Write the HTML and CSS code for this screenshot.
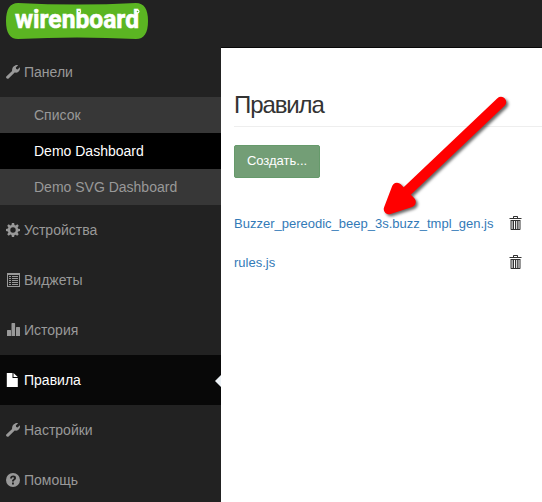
FILE: index.html
```html
<!DOCTYPE html>
<html lang="ru">
<head>
<meta charset="utf-8">
<title>Правила</title>
<link rel="stylesheet" href="styles.css">
</head>
<body>
<svg class="defs" width="0" height="0">
  <symbol id="wrench" viewBox="0 0 14 14"><path d="M.3 11.500 6.100 6C5.800 3.400 7 1.200 9.200.4c1-.4 2-.4 2.900-.1L9.800 2.600l.4 1.300 1.400.5L13.800 2.300c.5 1.800-.1 3.500-1.400 4.500-1 .8-2.300 1-3.700.7L2.600 13.500c-.5.5-1.100.4-1.700-.1-.8-.6-1.100-1.300-.6-1.900Z"/></symbol>
  <symbol id="cog" viewBox="0 0 14 14"><path fill-rule="evenodd" d="M5.900 0h2.200l.4 1.900 1.100.5L11.300 1.300l1.500 1.500-1.200 1.700.5 1.200 1.900.3v2.100l-1.900.4-.5 1.100 1.100 1.700-1.500 1.500-1.600-1.100-1.200.5L8.100 14H5.900l-.4-1.900-1.100-.5-1.700 1.200-1.500-1.500 1.200-1.700-.5-1.100L0 8.100V6l1.900-.4.500-1.200L1.200 2.800l1.500-1.500 1.700 1.100 1.100-.5ZM7 4.300a2.700 2.700 0 1 0 0 5.400 2.700 2.700 0 0 0 0-5.400Z"/></symbol>
  <symbol id="list" viewBox="0 0 14 14"><path fill-rule="evenodd" d="M1 0h13v14H1ZM2 2v11h11V2ZM3 3h2v1h-2ZM6 3h6v1h-6ZM3 5h2v1h-2ZM6 5h6v1h-6ZM3 7h2v1h-2ZM6 7h6v1h-6ZM3 9h2v1h-2ZM6 9h6v1h-6ZM3 11h2v1h-2ZM6 11h6v1h-6Z"/></symbol>
  <symbol id="stats" viewBox="0 0 14 14"><path d="M1 13V7.600q0-.6.600-.6H4.400q.6 0 .6.600V13ZM5.500 13V.6q0-.6.600-.6H8.500q.6 0 .6.600V13ZM10 13V4.600q0-.6.600-.6h2.800q.6 0 .6.600V13Z"/></symbol>
  <symbol id="file" viewBox="0 0 14 14"><path d="M.8 0h5.700v5h5.300v9H.8ZM7.500 0l4.300 4H7.500Z"/></symbol>
  <symbol id="help" viewBox="0 0 14 14"><path fill-rule="evenodd" d="M7 0a7 7 0 1 1 0 14A7 7 0 0 1 7 0ZM4.100 5.400H6c0-.8.400-1.200 1-1.200s1 .3 1 .8c0 .6-.4.900-.9 1.300-.7.500-1.100 1-1.100 2.200h1.900c0-.7.300-1 .9-1.500.7-.5 1.200-1.100 1.200-2.100C10 3.300 8.900 2.500 7.200 2.500 5.300 2.500 4.100 3.500 4.100 5.400ZM6 9.600v1.800h1.900V9.600Z"/></symbol>
  <symbol id="trash" viewBox="0 0 13 14"><path fill-rule="evenodd" d="M4 2V.8Q4 0 4.800 0h3.400Q9 0 9 .8V2h3.500v1H.5V2ZM5 1v1h3V1ZM1.500 4h10v9.300q0 .7-.7.700H2.200q-.7 0-.7-.7ZM2.600 5v8h1V5ZM5 5v8h1V5ZM7.200 5v8h1V5ZM9.500 5v8h1V5Z"/></symbol>
</svg>
<header class="navbar">
  <svg class="logo" width="150" height="42" viewBox="0 0 150 42">
    <path class="logo-plate" d="M18 3Q77 6 136 3C144 3 148 9 148 21S144 39 136 39Q77 36 18 39C10 39 6 33 6 21S10 3 18 3Z"/>
    <text class="logo-text" x="15" y="28" textLength="124" lengthAdjust="spacingAndGlyphs">wirenboard</text>
    <circle class="logo-plug" cx="79" cy="11.500" r="2"/><circle class="logo-plug" cx="137.500" cy="11.500" r="2"/>
    <circle class="logo-hole" cx="79" cy="11.500" r=".8"/><circle class="logo-hole" cx="137.500" cy="11.500" r=".8"/>
  </svg>
</header>
<div class="layout">
  <nav class="sidebar">
    <a class="item"><svg class="icon"><use href="#wrench"/></svg>Панели</a>
    <div class="submenu">
      <a class="subitem">Список</a>
      <a class="subitem current">Demo Dashboard</a>
      <a class="subitem">Demo SVG Dashboard</a>
    </div>
    <a class="item"><svg class="icon"><use href="#cog"/></svg>Устройства</a>
    <a class="item"><svg class="icon"><use href="#list"/></svg>Виджеты</a>
    <a class="item"><svg class="icon"><use href="#stats"/></svg>История</a>
    <a class="item active"><svg class="icon"><use href="#file"/></svg>Правила</a>
    <a class="item"><svg class="icon"><use href="#wrench"/></svg>Настройки</a>
    <a class="item"><svg class="icon"><use href="#help"/></svg>Помощь</a>
  </nav>
  <main class="content">
    <h1 class="title">Правила</h1>
    <button class="create">Создать...</button>
    <div class="rule"><a class="link">Buzzer_pereodic_beep_3s.buzz_tmpl_gen.js</a><svg class="trash"><use href="#trash"/></svg></div>
    <div class="rule"><a class="link">rules.js</a><svg class="trash"><use href="#trash"/></svg></div>
  </main>
</div>
<svg class="arrow" width="150" height="140" viewBox="370 85 150 140">
  <path d="M501 102 403 195" stroke-width="10.500"/>
  <path class="arrow-head" d="M397 188 389 209 410.500 202Z" stroke-width="10.500"/>
</svg>
</body>
</html>
```
FILE: styles.css
```css
* { box-sizing: border-box; }
body {
  margin: 0;
  width: 542px;
  height: 502px;
  overflow: hidden;
  background: #fff;
  color: #333;
  font: 14px/20px "Liberation Sans", Arial, sans-serif;
}
.defs { position: absolute; }
.navbar { height: 48px; background: #222; border-bottom: 1px solid #080808; }
.logo { display: block; overflow: visible; }
.logo-plate { fill: #5bb522; }
.logo-text { fill: #fff; stroke: #fff; stroke-width: .6px; font: 700 25px Roboto, sans-serif; }
.logo-plug { fill: #fff; }
.logo-hole { fill: #5bb522; }
.layout { display: flex; }
.sidebar { width: 221px; height: 455px; margin-top: -1px; background: #222; flex: none; }
.item { display: flex; align-items: center; height: 50px; padding-left: 6px; color: #999; }
.icon { width: 14px; height: 14px; margin-right: 4px; fill: currentColor; }
.active { position: relative; background: #080808; color: #fff; }
.active::after {
  content: "";
  position: absolute;
  right: 0;
  top: 20px;
  border: 6px solid transparent;
  border-right-color: #eef3f7;
  border-left: 0;
}
.subitem { display: block; height: 36px; padding: 8px 0 8px 34px; background: #373737; color: #999; }
.current { background: #000; color: #fff; }
.content { flex: 1; padding: 44px 0 0 13px; }
.title {
  margin: 0 0 18px;
  height: 35px;
  border-bottom: 1px solid #eee;
  font-size: 24px;
  font-weight: 400;
  line-height: 26px;
  letter-spacing: -1.1px;
}
.create {
  display: block;
  width: 86px;
  height: 33px;
  margin-bottom: 26px;
  padding: 0 0 2px;
  border: 1px solid #669a6b;
  border-radius: 2px;
  background: #739e76;
  color: #fff;
  font: 13px "Liberation Sans", Arial, sans-serif;
}
.rule { display: flex; align-items: center; height: 39px; }
.link { width: 275px; color: #337ab7; font-size: 13px; }
.trash { width: 13px; height: 14px; margin-top: -1px; fill: #333; }
.arrow {
  position: absolute;
  left: 370px;
  top: 85px;
  fill: none;
  stroke: #f00;
  stroke-linecap: round;
  stroke-linejoin: round;
  filter: drop-shadow(2px 2px 1.5px rgba(0, 0, 0, .6));
}
.arrow-head { fill: #f00; }
```
